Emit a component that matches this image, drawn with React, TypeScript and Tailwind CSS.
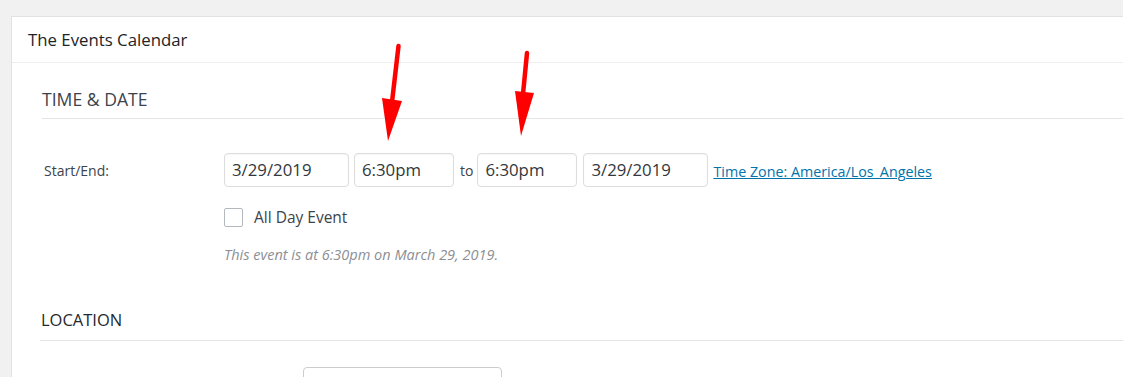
import React from "react";

function TextBox({ value, width }: { value: string; width: string }) {
  return (
    <div
      className={`${width} flex h-[34px] items-center rounded-[4px] border border-[#dddddd] bg-white pl-[7px] text-[16.8px] text-[#32373c] shadow-[inset_0_1px_2px_rgba(0,0,0,0.04)]`}
    >
      {value}
    </div>
  );
}

function Arrows() {
  return (
    <svg
      className="pointer-events-none absolute left-0 top-0"
      width="1123"
      height="377"
      viewBox="0 0 1123 377"
    >
      <line x1="398.5" y1="46" x2="392" y2="102" stroke="#ff0000" strokeWidth="4.5" strokeLinecap="round" />
      <polygon points="382,98 402,101 388,141" fill="#ff0000" />
      <line x1="527" y1="53" x2="523" y2="94" stroke="#ff0000" strokeWidth="4.5" strokeLinecap="round" />
      <polygon points="515,91 534,93 521,136" fill="#ff0000" />
    </svg>
  );
}

export default function App(): JSX.Element {
  return (
    <div
      className="relative h-[377px] w-[1123px] overflow-hidden bg-[#f1f1f1] pl-[11px] pt-[16px] text-[#32373c]"
      style={{ fontFamily: '"Open Sans", "Noto Sans", sans-serif' }}
    >
      <div className="w-[1140px] border border-[#e2e2e2] bg-white">
        <div className="flex h-[46px] items-center border-b border-[#eeeeee] pl-[16px] text-[16.8px] text-[#1d2327]">
          The Events Calendar
        </div>

        <div className="pl-[30px]">
          {/* Time & date */}
          <div className="mt-[26px] border-b border-[#e5e5e5] pb-[9px] text-[17.6px] leading-[20px] text-[#3c434a]">
            TIME &amp; DATE
          </div>

          <div className="mt-[34px] flex">
            <div className="flex h-[34px] w-[182px] items-center pl-[2px] text-[14px] text-[#3c434a]">
              Start/End:
            </div>
            <div className="flex flex-col">
              <div className="flex items-center">
                <TextBox value="3/29/2019" width="w-[125px]" />
                <div className="ml-[5px]">
                  <TextBox value="6:30pm" width="w-[100px]" />
                </div>
                <span className="ml-[6px] mr-[4px] text-[14px] text-[#3c434a]">to</span>
                <TextBox value="6:30pm" width="w-[100px]" />
                <div className="ml-[6px]">
                  <TextBox value="3/29/2019" width="w-[125px]" />
                </div>
                <a
                  href="#"
                  className="ml-[5px] mt-[4px] text-[14.3px] text-[#0073aa] underline"
                >
                  Time Zone: America/Los_Angeles
                </a>
              </div>

              <label className="mt-[19px] flex items-center">
                <span className="h-[19px] w-[19px] rounded-[2px] border border-[#b4b9be] bg-white" />
                <span className="ml-[11px] text-[15.5px] text-[#3c434a]">All Day Event</span>
              </label>

              <p className="mt-[17px] text-[14.5px] italic leading-[18px] text-[#8c8f94]">
                This event is at 6:30pm on March 29, 2019.
              </p>
            </div>
          </div>

          {/* Location */}
          <div className="-ml-[2px] mt-[46px] border-b border-[#e5e5e5] pb-[10px] pl-[1px] text-[16.5px] font-medium leading-[20px] text-[#23282d]">
            LOCATION
          </div>

          <div className="ml-[261px] mt-[26px] h-[34px] w-[199px] rounded-[4px] border border-[#cccccc]" />
        </div>
      </div>
      <Arrows />
    </div>
  );
}
